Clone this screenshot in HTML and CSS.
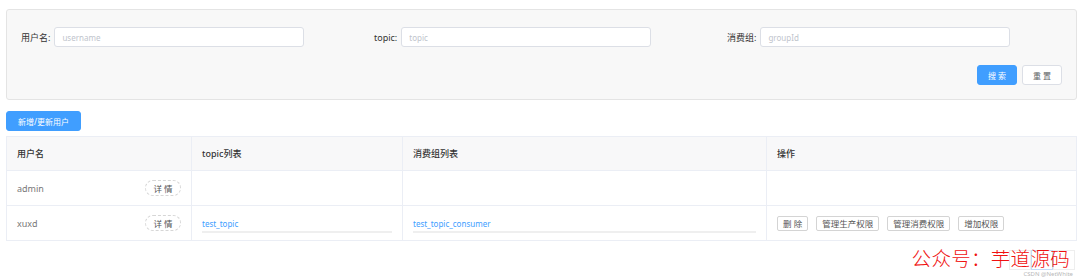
FILE: index.html
```html
<!DOCTYPE html>
<html lang="zh">
<head>
    <meta charset="UTF-8">
    <title>用户管理</title>
    <link rel="stylesheet" href="styles.css">
</head>
<body>
    <div class="page">
        <div class="search-box">
            <div class="search-row">
                <div class="field">
                    <label>用户名:</label>
                    <input type="text" placeholder="username">
                </div>
                <div class="field">
                    <label>topic:</label>
                    <input type="text" placeholder="topic">
                </div>
                <div class="field">
                    <label>消费组:</label>
                    <input type="text" placeholder="groupId">
                </div>
            </div>
            <div class="search-actions">
                <button class="btn btn-primary">搜 索</button>
                <button class="btn">重 置</button>
            </div>
        </div>

        <button class="btn btn-primary btn-add">新增/更新用户</button>

        <table class="user-table">
            <thead>
                <tr>
                    <th class="col-user">用户名</th>
                    <th class="col-topic">topic列表</th>
                    <th class="col-group">消费组列表</th>
                    <th>操作</th>
                </tr>
            </thead>
            <tbody>
                <tr>
                    <td><div class="user-cell"><span>admin</span><button class="btn-detail">详 情</button></div></td>
                    <td></td>
                    <td></td>
                    <td></td>
                </tr>
                <tr>
                    <td><div class="user-cell"><span>xuxd</span><button class="btn-detail">详 情</button></div></td>
                    <td><div class="tag-list"><a href="#">test_topic</a></div></td>
                    <td><div class="tag-list"><a href="#">test_topic_consumer</a></div></td>
                    <td>
                        <div class="ops">
                            <button class="btn-op">删 除</button>
                            <button class="btn-op">管理生产权限</button>
                            <button class="btn-op">管理消费权限</button>
                            <button class="btn-op">增加权限</button>
                        </div>
                    </td>
                </tr>
            </tbody>
        </table>

        <div class="footer">
            <div class="pager">
                <span class="pager-item"><svg width="6" height="8" viewBox="0 0 6 8"><path d="M4.5 1 L1.5 4 L4.5 7" fill="none" stroke="#c8c8c8" stroke-width="1"/></svg></span>
                <span class="pager-item active"></span>
                <span class="pager-item"><svg width="6" height="8" viewBox="0 0 6 8"><path d="M1.5 1 L4.5 4 L1.5 7" fill="none" stroke="#c8c8c8" stroke-width="1"/></svg></span>
            </div>
            <span class="watermark">公众号：芋道源码</span>
            <span class="csdn">CSDN @NetWhite</span>
        </div>
    </div>
</body>
</html>
```

FILE: styles.css
```css
body { margin: 0; font-family: "Noto Sans", "Noto Sans CJK SC", sans-serif; font-size: 9px; color: #606266; background: #fff; }
.page { padding: 9px 3px 0 6px; }

.search-box { background: #f8f8f8; border: 1px solid #e4e4e4; border-radius: 3px; padding: 17px 14px 14px 14px; }
.search-row { display: grid; grid-template-columns: repeat(3, 353px); }
.field { display: flex; align-items: center; gap: 4px; }
.field label { color: #333; font-size: 9px; white-space: nowrap; }
.field input { width: 250px; height: 20px; box-sizing: border-box; border: 1px solid #dcdfe6; border-radius: 3px; background: #fff; padding: 0 7px; font-family: inherit; font-size: 8px; color: #606266; }
.field input::placeholder { color: #c0c4cc; }
.search-actions { display: flex; justify-content: flex-end; gap: 5px; margin-top: 18px; }

.btn { height: 20px; width: 40px; padding: 0; border: 1px solid #dcdfe6; border-radius: 3px; background: #fff; color: #606266; font-family: inherit; font-size: 8px; cursor: pointer; }
.btn-primary { background: #409eff; border-color: #409eff; color: #fff; }
.btn-add { display: block; width: 75px; margin-top: 11px; }

.user-table { width: 100%; margin-top: 5px; border-collapse: collapse; border: 1px solid #ebeef5; table-layout: fixed; }
.user-table th, .user-table td { border: 1px solid #ebeef5; padding: 0 10px; text-align: left; }
.user-table th { height: 33px; background: #f8f8f9; color: #333; font-weight: 500; font-size: 9px; }
.user-table td { height: 34px; color: #777; font-size: 9px; }
.col-user { width: 164px; }
.col-topic { width: 190px; }
.col-group { width: 343px; }

.user-cell { display: flex; align-items: center; justify-content: space-between; }
.btn-detail { width: 36px; height: 16px; padding: 0; border: 1px dashed #d6d6d6; border-radius: 8px; background: #fff; color: #555; font-family: inherit; font-size: 8.5px; }

.tag-list { border-bottom: 2px solid #efefef; padding: 4px 0 1px; }
.tag-list a { color: #409eff; text-decoration: none; font-size: 8px; }

.ops { display: flex; gap: 8px; }
.btn-op { height: 15px; padding: 0 5px; border: 1px solid #d4d4d4; border-radius: 2px; background: #fff; color: #555; font-family: inherit; font-size: 8.5px; }

.footer { position: relative; height: 38px; }
.pager { position: absolute; right: 2px; top: 9px; display: flex; opacity: 0.6; }
.pager-item { width: 22px; height: 20px; box-sizing: border-box; border: 1px solid #e4e4e4; display: flex; align-items: center; justify-content: center; }
.pager-item.active { border-color: #9cc6f5; }
.watermark { position: absolute; right: 7px; top: 7px; line-height: 1; color: #f01010; font-size: 19.5px; letter-spacing: 0.3px; font-weight: 300; font-family: "Noto Sans CJK SC", sans-serif; }
.csdn { position: absolute; right: 4px; top: 30px; line-height: 1; color: #b8b8b8; font-size: 6px; }
```
